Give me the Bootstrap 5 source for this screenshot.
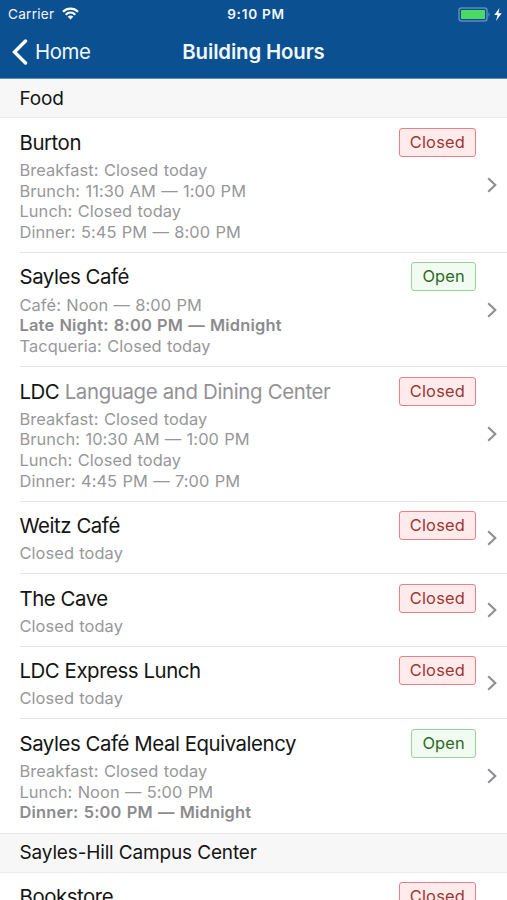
<!DOCTYPE html>
<html lang="en">
<head>
<meta charset="utf-8">
<meta name="viewport" content="width=device-width, initial-scale=1">
<title>Building Hours</title>
<link href="https://cdn.jsdelivr.net/npm/bootstrap@5.3.0/dist/css/bootstrap.min.css" rel="stylesheet">
<style>
  body { font-family: Inter, "Liberation Sans", sans-serif; color: #141414; height: 900px; overflow: hidden; background: #fff; }
  .app-top { background: #0b5090; height: 79px; border-bottom: 1px solid #5a8fc0; color: #f0f6fc; }
  .three { display: grid; grid-template-columns: 1fr auto 1fr; align-items: center; }
  .status { height: 28px; padding: 0 5px 0 8px; font-size: 13.6px; }
  .carrier { letter-spacing: .25px; }
  .clock { font-weight: 600; font-size: 13.6px; letter-spacing: .75px; padding-left: 2px; }
  .titlebar { height: 48px; padding: 0 12px; }
  .titlebar h1 { font-size: 20.4px; font-weight: 600; letter-spacing: -.15px; }
  .back { font-size: 20.4px; letter-spacing: -.45px; color: inherit; gap: 7px; }
  .section-head { background: #f7f7f7; height: 39.2px; padding: 2px 0 0 19.5px; font-size: 19px; letter-spacing: -.15px; border-bottom: 1px solid #ececec; }
  .section-head.later { border-top: 1px solid #e6e6e6; padding-top: 0; }
  .place { margin-left: 20px; padding: 9.5px 10px 9.2px 0; border-bottom: 1px solid #e4e4e4; }
  .place.final { border-bottom: 0; padding-bottom: 10.2px; }
  .place-name { font-size: 20.4px; line-height: 29px; letter-spacing: -.44px; margin: 0 0 3.1px -.5px; white-space: nowrap; }
  .place-name small { font-size: inherit; color: #929295; letter-spacing: -.34px; }
  .hours { font-size: 16.4px; line-height: 20.75px; color: #97979a; white-space: nowrap; letter-spacing: .08px; word-spacing: .6px; margin-left: -.5px; }
  .hours .now { font-weight: 600; color: #8b8b8e; letter-spacing: .2px; word-spacing: .8px; }
  .state { height: 29px; padding: 0 10px; line-height: 26.5px; font-size: 16.4px; letter-spacing: .2px; border: 1.5px solid; border-radius: 3px; margin-right: 11px; }
  .shut { color: #a03530; background: #ffebec; border-color: #e8808a; }
  .open { color: #2c6a22; background: #f1fbf1; border-color: #98d49a; }
</style>
</head>
<body>
<header class="app-top">
  <div class="status three">
    <div class="d-flex align-items-center" style="gap:8px">
      <span class="carrier">Carrier</span>
      <svg width="17" height="13" viewBox="0 0 17 13" fill="none" stroke="#fff" stroke-width="2.2"><path d="M1 4.8C5.200 .6 11.800 .6 16 4.800M3.700 7.700C6.500 5 10.500 5 13.300 7.700"/><path d="M8.500 12.600L5.700 9.700C7.200 8.200 9.800 8.200 11.300 9.700Z" fill="#fff" stroke="none"/></svg>
    </div>
    <div class="clock">9:10 PM</div>
    <div class="d-flex align-items-center justify-content-end" style="gap:3px">
      <svg width="33" height="15" viewBox="0 0 33 15"><rect x="1" y="1" width="28" height="13" rx="2.500" fill="none" stroke="#5c8dbd" stroke-width="1.500"/><rect x="3" y="3" width="24" height="9" rx=".6" fill="#4cd964"/><path d="M30.500 5Q32.600 7.500 30.500 10Z" fill="#6f9ac5"/></svg>
      <svg width="8" height="13" viewBox="0 0 8 13" fill="#fff"><path d="M5.500 0L.3 7H3.500L2 13L7.700 5.300H4.400Z"/></svg>
    </div>
  </div>
  <nav class="titlebar three">
    <a href="#" class="back d-flex align-items-center text-decoration-none">
      <svg width="16" height="26" viewBox="0 0 16 26" fill="none" stroke="#fff" stroke-width="3.400" stroke-linecap="round"><path d="M13.500 2L2.500 13L13.500 24"/></svg>
      <span>Home</span>
    </a>
    <h1 class="m-0">Building Hours</h1>
  </nav>
</header>
<svg class="d-none"><symbol id="chev" viewBox="0 0 10 16"><path d="M1.200 1.300L8.300 8L1.200 14.700" fill="none" stroke="#8e8e92" stroke-width="2.100"/></symbol></svg>
<main>
  <h2 class="section-head d-flex align-items-center m-0 fw-normal">Food</h2>
  <article class="place d-flex">
    <div class="flex-grow-1"><div class="place-name">Burton</div>
      <div class="hours"><div>Breakfast: Closed today</div><div>Brunch: 11:30 AM — 1:00 PM</div><div>Lunch: Closed today</div><div>Dinner: 5:45 PM — 8:00 PM</div></div></div>
    <span class="state shut">Closed</span><svg class="align-self-center" width="10" height="16"><use href="#chev"/></svg>
  </article>
  <article class="place d-flex">
    <div class="flex-grow-1"><div class="place-name">Sayles Café</div>
      <div class="hours"><div>Café: Noon — 8:00 PM</div><div class="now">Late Night: 8:00 PM — Midnight</div><div>Tacqueria: Closed today</div></div></div>
    <span class="state open">Open</span><svg class="align-self-center" width="10" height="16"><use href="#chev"/></svg>
  </article>
  <article class="place d-flex">
    <div class="flex-grow-1"><div class="place-name">LDC <small>Language and Dining Center</small></div>
      <div class="hours"><div>Breakfast: Closed today</div><div>Brunch: 10:30 AM — 1:00 PM</div><div>Lunch: Closed today</div><div>Dinner: 4:45 PM — 7:00 PM</div></div></div>
    <span class="state shut">Closed</span><svg class="align-self-center" width="10" height="16"><use href="#chev"/></svg>
  </article>
  <article class="place d-flex">
    <div class="flex-grow-1"><div class="place-name">Weitz Café</div><div class="hours">Closed today</div></div>
    <span class="state shut">Closed</span><svg class="align-self-center" width="10" height="16"><use href="#chev"/></svg>
  </article>
  <article class="place d-flex">
    <div class="flex-grow-1"><div class="place-name">The Cave</div><div class="hours">Closed today</div></div>
    <span class="state shut">Closed</span><svg class="align-self-center" width="10" height="16"><use href="#chev"/></svg>
  </article>
  <article class="place d-flex">
    <div class="flex-grow-1"><div class="place-name">LDC Express Lunch</div><div class="hours">Closed today</div></div>
    <span class="state shut">Closed</span><svg class="align-self-center" width="10" height="16"><use href="#chev"/></svg>
  </article>
  <article class="place final d-flex">
    <div class="flex-grow-1"><div class="place-name">Sayles Café Meal Equivalency</div>
      <div class="hours"><div>Breakfast: Closed today</div><div>Lunch: Noon — 5:00 PM</div><div class="now">Dinner: 5:00 PM — Midnight</div></div></div>
    <span class="state open">Open</span><svg class="align-self-center" width="10" height="16"><use href="#chev"/></svg>
  </article>
  <h2 class="section-head later d-flex align-items-center m-0 fw-normal">Sayles-Hill Campus Center</h2>
  <article class="place d-flex">
    <div class="flex-grow-1"><div class="place-name">Bookstore</div><div class="hours">&nbsp;</div></div>
    <span class="state shut">Closed</span><svg class="align-self-center" width="10" height="16"><use href="#chev"/></svg>
  </article>
</main>
<script src="https://cdn.jsdelivr.net/npm/bootstrap@5.3.0/dist/js/bootstrap.bundle.min.js"></script>
</body>
</html>
